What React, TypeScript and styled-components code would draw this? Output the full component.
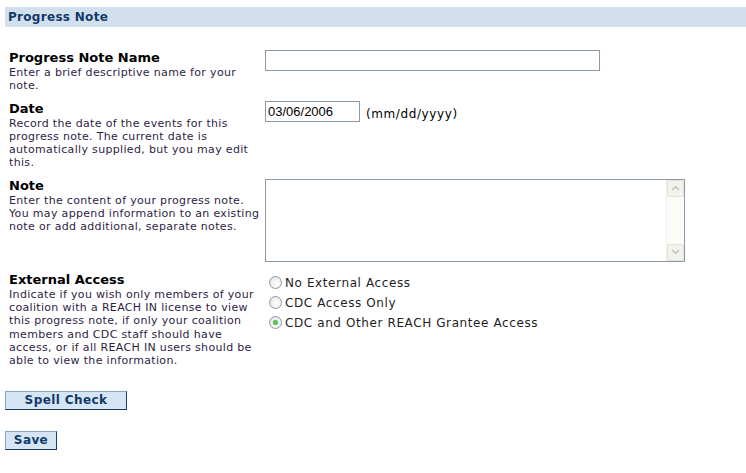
import styled, { createGlobalStyle } from "styled-components";
import { useState } from "react";

const GlobalStyle = createGlobalStyle`
  body {
    margin: 0;
    background: #fff;
    font-family: "DejaVu Sans", Verdana, sans-serif;
  }
`;

const Page = styled.div`
  padding: 7px 0 0 5px;
  width: 741px;
`;

const HeaderBar = styled.div`
  height: 20px;
  display: flex;
  align-items: center;
  padding-left: 3px;
  background-color: #d2e0ee;
  color: #123a6a;
  font-size: 12px;
  font-weight: bold;
  letter-spacing: 0.3px;
`;

const FormGrid = styled.div`
  display: grid;
  grid-template-columns: 256px 1fr;
  row-gap: 8px;
  margin-top: 23px;
  padding-left: 4px;
`;

const Label = styled.div`
  display: flex;
  flex-direction: column;
  padding-right: 4px;
`;

const LabelTitle = styled.div`
  font-size: 13px;
  font-weight: bold;
  line-height: 16px;
  color: #000;
`;

const LabelHint = styled.div`
  font-size: 11px;
  line-height: 13.3px;
  letter-spacing: 0.33px;
  color: #2f1d45;
`;

const Control = styled.div<{ $row?: boolean }>`
  display: flex;
  flex-direction: ${p => (p.$row ? "row" : "column")};
  align-items: flex-start;
  gap: 6px;
`;

const TextInput = styled.input<{ $width: number }>`
  box-sizing: border-box;
  width: ${p => p.$width}px;
  height: 21px;
  margin: 0;
  padding: 1px 2px;
  border: 1px solid #8b9aa6;
  font-family: "Liberation Sans", Arial, sans-serif;
  font-size: 13px;
  color: #000;
  outline: none;
`;

const Hint = styled.span`
  font-size: 12px;
  line-height: 26px;
  letter-spacing: 0.6px;
  color: #000;
`;

const NoteBox = styled.div`
  box-sizing: border-box;
  display: flex;
  width: 420px;
  height: 83px;
  margin-top: 1px;
  margin-bottom: 2px;
  border: 1px solid #8b9aa6;
  background: #fff;
`;

const NoteArea = styled.textarea`
  flex: 1;
  margin: 0;
  border: none;
  resize: none;
  outline: none;
  overflow: hidden;
  font-family: "Liberation Sans", Arial, sans-serif;
  font-size: 13px;
`;

const ScrollTrack = styled.div`
  display: flex;
  flex-direction: column;
  width: 17px;
  background: #fcfcf9;
  border-left: 1px solid #f0f0ea;
`;

const ScrollButton = styled.div`
  box-sizing: border-box;
  height: 17px;
  display: flex;
  align-items: center;
  justify-content: center;
  background: #f3f3ee;
  border: 1px solid #e2e2da;
  border-radius: 2px;
`;

const ScrollSpace = styled.div`
  flex: 1;
`;

const RadioList = styled.div`
  display: flex;
  flex-direction: column;
  padding-top: 1px;
`;

const RadioRow = styled.label`
  display: flex;
  align-items: center;
  height: 20px;
  gap: 3px;
  padding-left: 4px;
  font-size: 12px;
  letter-spacing: 0.6px;
  color: #1e1e1e;
  cursor: pointer;
`;

const RadioInput = styled.input`
  appearance: none;
  box-sizing: border-box;
  width: 13px;
  height: 13px;
  margin: 0;
  border: 1px solid #8e9aa6;
  border-radius: 50%;
  background: radial-gradient(circle at 60% 60%, #ffffff 0%, #ececec 60%, #d4d4d4 100%);
  display: grid;
  place-items: center;
  &:checked::after {
    content: "";
    width: 5px;
    height: 5px;
    border-radius: 50%;
    background: radial-gradient(circle, #6fdc6f 0%, #2a9d2a 100%);
  }
`;

const Actions = styled.div`
  display: flex;
  flex-direction: column;
  align-items: flex-start;
  gap: 21px;
  margin-top: 23px;
`;

const ActionButton = styled.button<{ $width: number }>`
  box-sizing: border-box;
  width: ${p => p.$width}px;
  height: 19px;
  margin: 0;
  padding: 0;
  background-color: #d5e5f3;
  border: 1px solid #8aa3bd;
  border-right-color: #183a60;
  border-bottom-color: #183a60;
  color: #123a6a;
  font-family: "DejaVu Sans", Verdana, sans-serif;
  font-size: 12px;
  font-weight: bold;
  letter-spacing: 0.4px;
  line-height: 17px;
  cursor: pointer;
`;

const Chevron = (props: { up?: boolean }) => (
  <svg width="9" height="6" viewBox="0 0 9 6">
    <path
      d={props.up ? "M1 5 L4.5 1.5 L8 5" : "M1 1 L4.5 4.5 L8 1"}
      fill="none"
      stroke="#c3c3bb"
      strokeWidth="1.5"
    />
  </svg>
);

const accessOptions = [
  { id: "none", text: "No External Access" },
  { id: "cdc", text: "CDC Access Only" },
  { id: "all", text: "CDC and Other REACH Grantee Access" },
];

const App = () => {
  const [access, setAccess] = useState<string>("all");

  return (
    <Page>
      <GlobalStyle />
      <HeaderBar>Progress Note</HeaderBar>
      <FormGrid>
        <Label>
          <LabelTitle>Progress Note Name</LabelTitle>
          <LabelHint>Enter a brief descriptive name for your note.</LabelHint>
        </Label>
        <Control>
          <TextInput $width={335} type="text" />
        </Control>

        <Label>
          <LabelTitle>Date</LabelTitle>
          <LabelHint>
            Record the date of the events for this progress note. The current date is
            automatically supplied, but you may edit this.
          </LabelHint>
        </Label>
        <Control $row>
          <TextInput $width={95} type="text" defaultValue="03/06/2006" />
          <Hint>(mm/dd/yyyy)</Hint>
        </Control>

        <Label>
          <LabelTitle>Note</LabelTitle>
          <LabelHint>
            Enter the content of your progress note. You may append information to an
            existing note or add additional, separate notes.
          </LabelHint>
        </Label>
        <Control>
          <NoteBox>
            <NoteArea />
            <ScrollTrack>
              <ScrollButton>
                <Chevron up />
              </ScrollButton>
              <ScrollSpace />
              <ScrollButton>
                <Chevron />
              </ScrollButton>
            </ScrollTrack>
          </NoteBox>
        </Control>

        <Label>
          <LabelTitle>External Access</LabelTitle>
          <LabelHint>
            Indicate if you wish only members of your coalition with a REACH IN license
            to view this progress note, if only your coalition members and CDC staff
            should have access, or if all REACH IN users should be able to view the
            information.
          </LabelHint>
        </Label>
        <Control>
          <RadioList>
            {accessOptions.map(o => (
              <RadioRow key={o.id}>
                <RadioInput
                  type="radio"
                  name="access"
                  checked={access === o.id}
                  onChange={() => setAccess(o.id)}
                />
                {o.text}
              </RadioRow>
            ))}
          </RadioList>
        </Control>
      </FormGrid>
      <Actions>
        <ActionButton $width={122}>Spell Check</ActionButton>
        <ActionButton $width={52}>Save</ActionButton>
      </Actions>
    </Page>
  );
};

export default App;
